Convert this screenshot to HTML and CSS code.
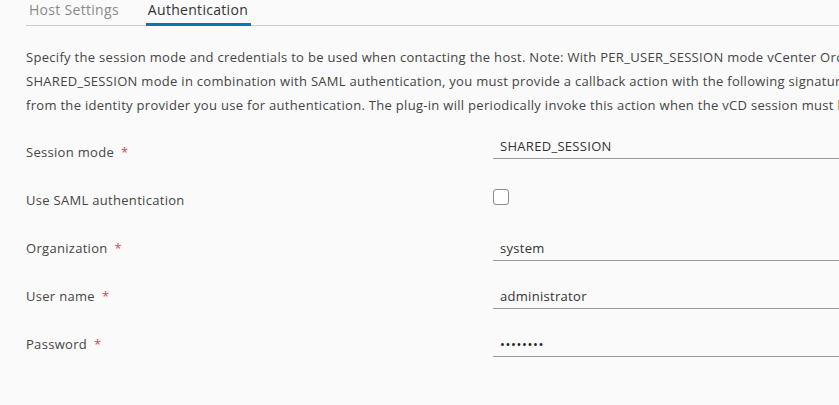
FILE: index.html
```html
<!DOCTYPE html>
<html>
<head>
<meta charset="utf-8">
<link rel="stylesheet" href="styles.css">
</head>
<body>
<div class="page">
  <nav class="tabs">
    <div class="tab">Host Settings</div>
    <div class="tab active">Authentication</div>
  </nav>
  <div class="desc">
    <div class="line">Specify the session mode and credentials to be used when contacting the host. Note: With PER_USER_SESSION mode vCenter Orchestrator will use the</div>
    <div class="line">SHARED_SESSION mode in combination with SAML authentication, you must provide a callback action with the following signature</div>
    <div class="line">from the identity provider you use for authentication. The plug-in will periodically invoke this action when the vCD session must be renewed.</div>
  </div>
  <form class="form">
    <div class="row">
      <label class="label">Session mode<span class="req">*</span></label>
      <div class="field select">SHARED_SESSION</div>
    </div>
    <div class="row">
      <label class="label">Use SAML authentication</label>
      <div class="checkbox"></div>
    </div>
    <div class="row">
      <label class="label">Organization<span class="req">*</span></label>
      <div class="field">system</div>
    </div>
    <div class="row">
      <label class="label">User name<span class="req">*</span></label>
      <div class="field">administrator</div>
    </div>
    <div class="row">
      <label class="label">Password<span class="req">*</span></label>
      <div class="field pw">••••••••</div>
    </div>
  </form>
</div>
</body>
</html>
```
FILE: styles.css
```css
html, body {
  margin: 0;
  padding: 0;
  background: #fafafa;
  overflow: hidden;
}
body {
  font-family: "Open Sans", "Liberation Sans", sans-serif;
  font-size: 13px;
  letter-spacing: 0.3px;
  color: #454545;
}
.page {
  padding-left: 26px;
  width: 813px;
  overflow: hidden;
}
.tabs {
  display: flex;
  gap: 25px;
  height: 26px;
  box-sizing: border-box;
  border-bottom: 1px solid #cccccc;
}
.tab {
  font-size: 14px;
  line-height: 20px;
  padding: 0 2px;
  color: #8a8a8a;
  height: 25px;
  box-sizing: border-box;
}
.tab:first-child {
  margin-left: 1px;
}
.tab.active {
  color: #333333;
  border-bottom: 3px solid #0079b8;
  height: 26px;
  padding: 0 3px 0 2px;
}
.desc {
  margin-top: 19px;
  line-height: 24px;
}
.line {
  white-space: nowrap;
}
.form {
  margin-top: 23px;
}
.row {
  display: flex;
  height: 48px;
  align-items: flex-start;
}
.label {
  width: 467px;
  flex: none;
  line-height: 24px;
}
.req {
  color: #d04a4a;
  margin-left: 7px;
}
.field {
  flex: 1;
  line-height: 24px;
  padding-left: 7px;
  border-bottom: 1px solid #9a9a9a;
  color: #333333;
}
.field.select {
  margin-top: -6px;
}
.field.pw {
  font-size: 13px;
  letter-spacing: 0.6px;
  color: #222222;
}
.checkbox {
  margin-top: 1px;
  width: 16px;
  height: 16px;
  box-sizing: border-box;
  border: 1px solid #8c8c8c;
  border-radius: 3px;
  background: #ffffff;
}
```
